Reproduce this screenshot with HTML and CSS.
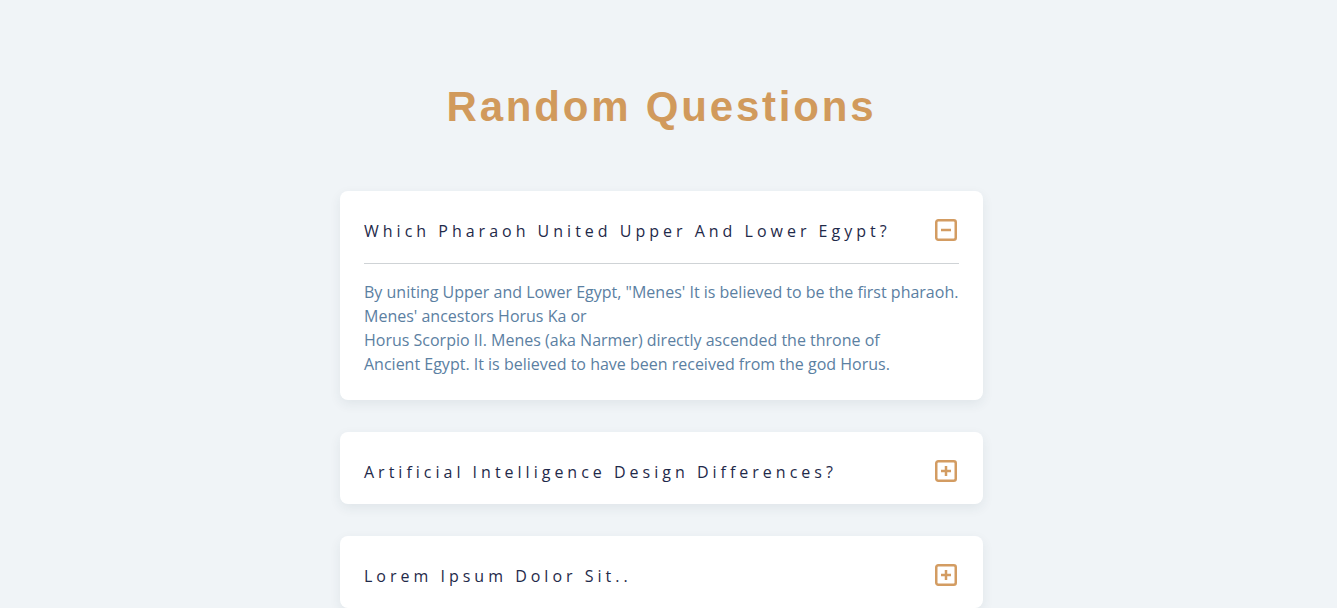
FILE: index.html
```html
<!DOCTYPE html>
<html lang="en">
<head>
<meta charset="utf-8">
<title>Random Questions</title>
<link rel="stylesheet" href="styles.css">
</head>
<body>
<main class="faq">
  <h1 class="faq-title">Random Questions</h1>

  <section class="card open">
    <div class="card-head">
      <h2 class="question">Which Pharaoh United Upper And Lower Egypt?</h2>
      <svg class="toggle" viewBox="0 0 24 24" width="24" height="24" aria-hidden="true">
        <rect x="2.25" y="2.25" width="19.5" height="19.5" rx="2" fill="none" stroke="currentColor" stroke-width="2.5"/>
        <line x1="7" y1="12" x2="17" y2="12" stroke="currentColor" stroke-width="2.5"/>
      </svg>
    </div>
    <div class="answer">
      <p>By uniting Upper and Lower Egypt, "Menes' It is believed to be the first pharaoh.<br>Menes' ancestors Horus Ka or<br>Horus Scorpio II. Menes (aka Narmer) directly ascended the throne of<br>Ancient Egypt. It is believed to have been received from the god Horus.</p>
    </div>
  </section>

  <section class="card">
    <div class="card-head">
      <h2 class="question">Artificial Intelligence Design Differences?</h2>
      <svg class="toggle" viewBox="0 0 24 24" width="24" height="24" aria-hidden="true">
        <rect x="2.25" y="2.25" width="19.5" height="19.5" rx="2" fill="none" stroke="currentColor" stroke-width="2.5"/>
        <line x1="7" y1="12" x2="17" y2="12" stroke="currentColor" stroke-width="2.5"/>
        <line x1="12" y1="7" x2="12" y2="17" stroke="currentColor" stroke-width="2.5"/>
      </svg>
    </div>
  </section>

  <section class="card">
    <div class="card-head">
      <h2 class="question">Lorem Ipsum Dolor Sit..</h2>
      <svg class="toggle" viewBox="0 0 24 24" width="24" height="24" aria-hidden="true">
        <rect x="2.25" y="2.25" width="19.5" height="19.5" rx="2" fill="none" stroke="currentColor" stroke-width="2.5"/>
        <line x1="7" y1="12" x2="17" y2="12" stroke="currentColor" stroke-width="2.5"/>
        <line x1="12" y1="7" x2="12" y2="17" stroke="currentColor" stroke-width="2.5"/>
      </svg>
    </div>
  </section>
</main>
</body>
</html>
```

FILE: styles.css
```css
* {
  box-sizing: border-box;
}

html, body {
  margin: 0;
  padding: 0;
}

body {
  background: #f0f4f7;
  font-family: "Open Sans", "Liberation Sans", sans-serif;
  padding-right: 14px;
}

.faq {
  width: 643px;
  margin: 0 auto;
  padding: 83px 0 60px;
}

.faq-title {
  margin: 0 0 60px;
  font-family: "Liberation Sans", Arial, sans-serif;
  font-weight: 700;
  font-size: 42px;
  line-height: 48px;
  letter-spacing: 2.8px;
  text-align: center;
  color: #d19a5c;
}

.card {
  background: #ffffff;
  border-radius: 8px;
  box-shadow: 0 4px 12px rgba(40, 60, 80, 0.08);
  margin-bottom: 32px;
}

.card-head {
  display: flex;
  align-items: center;
  justify-content: space-between;
  height: 72px;
  padding: 8px 24px 0;
}

.question {
  margin: 0;
  font-size: 16px;
  font-weight: 400;
  line-height: 24px;
  letter-spacing: 4px;
  color: #1f2a4a;
}

.toggle {
  flex: none;
  color: #d39c62;
  margin: 0 1px 2px 0;
}

.answer {
  margin: 0 24px;
  border-top: 1px solid #cfd3d6;
  padding: 16px 0 24px;
}

.answer p {
  margin: 0;
  font-size: 16px;
  line-height: 24px;
  color: #5b80a2;
}
```
